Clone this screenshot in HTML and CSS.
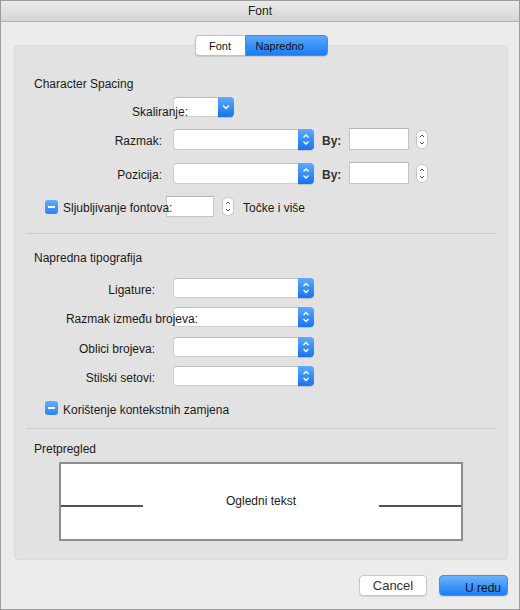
FILE: index.html
```html
<!DOCTYPE html>
<html>
<head>
    <meta charset="UTF-8">
    <title>Font</title>
    <link rel="stylesheet" href="styles.css">
</head>
<body>
    <div class="window">
        <div class="titlebar">Font</div>
        <div class="content">
            <div class="tabs">
                <span class="tab">Font</span>
                <span class="tab active">Napredno</span>
            </div>

            <div class="panel">
                <div class="section">
                    <div class="heading">Character Spacing</div>

                    <div class="row row-scale">
                        <span class="label label-scale">Skaliranje:</span>
                        <div class="select select-short">
                            <div class="select-field"></div>
                            <div class="select-btn">
                                <svg width="16" height="20" viewBox="0 0 16 20"><path d="M5 8.5 L8 11.5 L11 8.5" fill="none" stroke="#fff" stroke-width="1.5"/></svg>
                            </div>
                        </div>
                    </div>

                    <div class="row row-by">
                        <span class="label">Razmak:</span>
                        <div class="select">
                            <div class="select-field"></div>
                            <div class="select-btn">
                                <svg width="16" height="21" viewBox="0 0 16 21"><path d="M5.5 8.5 L8 6 L10.5 8.5 M5.5 12.5 L8 15 L10.5 12.5" fill="none" stroke="#fff" stroke-width="1.4"/></svg>
                            </div>
                        </div>
                        <span class="by">By:</span>
                        <div class="input"></div>
                        <svg class="stepper" width="12" height="19" viewBox="0 0 12 19"><rect x="0.5" y="0.5" width="11" height="18" rx="5" fill="#fff" stroke="#c4c4c4"/><path d="M4 7 L6 5 L8 7 M4 12 L6 14 L8 12" fill="none" stroke="#555" stroke-width="1"/></svg>
                    </div>

                    <div class="row row-by">
                        <span class="label">Pozicija:</span>
                        <div class="select">
                            <div class="select-field"></div>
                            <div class="select-btn">
                                <svg width="16" height="21" viewBox="0 0 16 21"><path d="M5.5 8.5 L8 6 L10.5 8.5 M5.5 12.5 L8 15 L10.5 12.5" fill="none" stroke="#fff" stroke-width="1.4"/></svg>
                            </div>
                        </div>
                        <span class="by">By:</span>
                        <div class="input"></div>
                        <svg class="stepper" width="12" height="19" viewBox="0 0 12 19"><rect x="0.5" y="0.5" width="11" height="18" rx="5" fill="#fff" stroke="#c4c4c4"/><path d="M4 7 L6 5 L8 7 M4 12 L6 14 L8 12" fill="none" stroke="#555" stroke-width="1"/></svg>
                    </div>

                    <div class="row row-kern">
                        <span class="check"><span class="dash"></span></span>
                        <span class="check-text kern-text">Sljubljivanje fontova:</span>
                        <div class="input input-small"></div>
                        <svg class="stepper" width="12" height="19" viewBox="0 0 12 19"><rect x="0.5" y="0.5" width="11" height="18" rx="5" fill="#fff" stroke="#c4c4c4"/><path d="M4 7 L6 5 L8 7 M4 12 L6 14 L8 12" fill="none" stroke="#555" stroke-width="1"/></svg>
                        <span class="unit">Točke i više</span>
                    </div>
                </div>

                <div class="separator"></div>

                <div class="section">
                    <div class="heading heading-typo">Napredna tipografija</div>

                    <div class="row row-typo first">
                        <span class="label">Ligature:</span>
                        <div class="select">
                            <div class="select-field"></div>
                            <div class="select-btn">
                                <svg width="16" height="20" viewBox="0 0 16 20"><path d="M5.5 8 L8 5.5 L10.5 8 M5.5 12 L8 14.5 L10.5 12" fill="none" stroke="#fff" stroke-width="1.4"/></svg>
                            </div>
                        </div>
                    </div>

                    <div class="row row-typo">
                        <span class="label label-long">Razmak između brojeva:</span>
                        <div class="select">
                            <div class="select-field"></div>
                            <div class="select-btn">
                                <svg width="16" height="20" viewBox="0 0 16 20"><path d="M5.5 8 L8 5.5 L10.5 8 M5.5 12 L8 14.5 L10.5 12" fill="none" stroke="#fff" stroke-width="1.4"/></svg>
                            </div>
                        </div>
                    </div>

                    <div class="row row-typo wider">
                        <span class="label">Oblici brojeva:</span>
                        <div class="select">
                            <div class="select-field"></div>
                            <div class="select-btn">
                                <svg width="16" height="20" viewBox="0 0 16 20"><path d="M5.5 8 L8 5.5 L10.5 8 M5.5 12 L8 14.5 L10.5 12" fill="none" stroke="#fff" stroke-width="1.4"/></svg>
                            </div>
                        </div>
                    </div>

                    <div class="row row-typo">
                        <span class="label">Stilski setovi:</span>
                        <div class="select">
                            <div class="select-field"></div>
                            <div class="select-btn">
                                <svg width="16" height="20" viewBox="0 0 16 20"><path d="M5.5 8 L8 5.5 L10.5 8 M5.5 12 L8 14.5 L10.5 12" fill="none" stroke="#fff" stroke-width="1.4"/></svg>
                            </div>
                        </div>
                    </div>

                    <div class="row row-context">
                        <span class="check"><span class="dash"></span></span>
                        <span class="check-text">Korištenje kontekstnih zamjena</span>
                    </div>
                </div>

                <div class="separator separator-low"></div>

                <div class="section">
                    <div class="heading heading-preview">Pretpregled</div>
                </div>

                <div class="preview">
                    <div class="preview-line"></div>
                    <div class="preview-text">Ogledni tekst</div>
                    <div class="preview-line"></div>
                </div>
            </div>

            <div class="buttons">
                <button class="btn">Cancel</button>
                <button class="btn btn-primary">U redu</button>
            </div>
        </div>
    </div>
</body>
</html>
```

FILE: styles.css
```css
* {
    margin: 0;
    padding: 0;
    box-sizing: border-box;
}

body {
    font-family: "Liberation Sans", Arial, sans-serif;
    font-size: 12px;
    color: #1a1a1a;
    background: #ececec;
}

.window {
    width: 520px;
    height: 610px;
    background: #ececec;
    border: 1px solid #9c9c9c;
}

.titlebar {
    height: 21px;
    line-height: 20px;
    text-align: center;
    background: linear-gradient(#ebebeb, #d5d5d5);
    border-bottom: 1px solid #b4b4b4;
    color: #222;
}

.content {
    padding: 0 11px 0 13px;
}

/* segmented control */
.tabs {
    display: flex;
    justify-content: center;
    margin-top: 13px;
    margin-bottom: -11px;
    position: relative;
    z-index: 1;
}

.tab {
    height: 21px;
    line-height: 20px;
    font-size: 11px;
    color: #111;
    background: #fff;
    border: 1px solid #c2c2c2;
    box-shadow: 0 1px 1px rgba(0, 0, 0, 0.12);
}

.tab:first-child {
    width: 50px;
    text-align: center;
    border-right: none;
    border-radius: 4px 0 0 4px;
}

.tab.active {
    width: 83px;
    padding-left: 10px;
    background: linear-gradient(#5aa8fc, #1a7cf5);
    border-color: #3b8ef4;
    border-radius: 0 4px 4px 0;
}

.panel {
    height: 515px;
    background: #e2e2e2;
    border: 1px solid #dadada;
    border-radius: 4px;
    padding: 30px 11px 0 11px;
}

.section {
    padding-left: 8px;
}

.heading {
    line-height: 16px;
}

.heading-typo {
    margin-top: 16px;
}

.heading-preview {
    margin-top: 12px;
}

.separator {
    height: 1px;
    margin-top: 16px;
    background: #cdcdcd;
}

.separator-low {
    margin-top: 13px;
}

/* rows */
.row {
    display: flex;
    align-items: center;
    height: 22px;
    margin-top: 12px;
}

.row-scale {
    height: 20px;
    margin-top: 5px;
    align-items: flex-start;
}

.row-by:nth-child(3) {
    margin-top: 11px;
}

.row-kern {
    height: 21px;
}

.row-typo {
    height: 20px;
    margin-top: 9px;
}

.row-typo.first {
    margin-top: 12px;
}

.row-typo.wider {
    margin-top: 10px;
}

.row-context {
    height: 14px;
    margin-top: 15px;
}

.label {
    width: 139px;
    flex-shrink: 0;
    text-align: right;
    white-space: nowrap;
    line-height: 16px;
    padding-top: 4px;
    padding-right: 11px;
}

.row-typo .label {
    padding-right: 18px;
}

.label-scale {
    width: 154px;
    margin-right: -15px;
    padding-right: 0;
    padding-top: 7px;
    position: relative;
    z-index: 1;
}

.row-typo .label-long {
    width: 164px;
    margin-right: -25px;
    padding-right: 0;
    position: relative;
    z-index: 1;
}

/* popup buttons */
.select {
    display: flex;
    width: 141px;
    height: 21px;
    flex-shrink: 0;
}

.row-typo .select {
    height: 20px;
}

.select-short {
    width: 61px;
    height: 20px;
}

.select-field {
    flex: 1;
    background: #fff;
    border: 1px solid #cfcfcf;
    border-top-color: #bebebe;
    border-right: none;
    border-radius: 4px 0 0 4px;
}

.select-btn {
    width: 16px;
    display: flex;
    align-items: center;
    justify-content: center;
    background: linear-gradient(#5eabfc, #1673f1);
    border-radius: 0 4px 4px 0;
    box-shadow: 0 1px 1px rgba(0, 0, 0, 0.15);
}

.by {
    width: 27px;
    margin-left: 8px;
    font-weight: bold;
    color: #333;
    padding-top: 3px;
}

.input {
    width: 60px;
    height: 22px;
    background: #fff;
    border: 1px solid #c4c4c4;
    border-top-color: #b6b6b6;
}

.input-small {
    width: 48px;
    height: 21px;
}

.stepper {
    margin-left: 7px;
    flex-shrink: 0;
}

.row-kern .stepper {
    margin-left: 8px;
}

/* checkboxes */
.check {
    width: 13px;
    height: 14px;
    margin-left: 11px;
    flex-shrink: 0;
    display: flex;
    align-items: center;
    justify-content: center;
    background: linear-gradient(#62adfc, #2a83f4);
    border-radius: 3px;
}

.dash {
    width: 7px;
    height: 2px;
    background: #fff;
}

.check-text {
    margin-left: 5px;
    line-height: 16px;
    padding-top: 3px;
    white-space: nowrap;
}

.kern-text {
    width: 103px;
    position: relative;
    z-index: 1;
}

.unit {
    margin-left: 9px;
    padding-top: 3px;
}

/* preview */
.preview {
    display: flex;
    align-items: center;
    width: 404px;
    height: 79px;
    margin: 5px auto 0;
    background: #fff;
    border: 2px solid #8e8e8e;
}

.preview-line {
    width: 82px;
    height: 2px;
    margin-top: 9px;
    background: #555;
}

.preview-text {
    flex: 1;
    text-align: center;
    padding-bottom: 1px;
}

/* bottom buttons */
.buttons {
    display: flex;
    justify-content: flex-end;
    gap: 12px;
    margin-top: 15px;
}

.btn {
    width: 68px;
    height: 21px;
    font-family: "Liberation Sans", Arial, sans-serif;
    font-size: 13px;
    color: #333;
    background: #fff;
    border: 1px solid #c8c8c8;
    border-radius: 4px;
    box-shadow: 0 1px 1px rgba(0, 0, 0, 0.1);
}

.btn-primary {
    width: 69px;
    font-size: 12px;
    color: #111;
    text-align: left;
    padding: 4px 0 0 25px;
    background: linear-gradient(#6ab3fc, #1b7ef6);
    border-color: #3d8ff3;
}
```
